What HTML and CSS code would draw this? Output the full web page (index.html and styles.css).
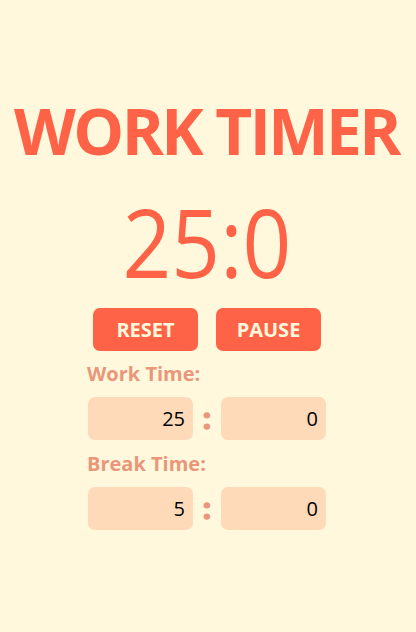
FILE: index.html
```html
<!DOCTYPE html>
<html>
<head>
<meta charset="utf-8">
<link rel="stylesheet" href="styles.css">
</head>
<body>
<main class="app">
  <h1 class="title">WORK TIMER</h1>
  <div class="clock">25:0</div>
  <div class="controls">
    <button class="btn">RESET</button>
    <button class="btn">PAUSE</button>
  </div>
  <section class="settings">
    <label class="label">Work Time:</label>
    <div class="row">
      <input class="field" type="text" value="25">
      <span class="sep">:</span>
      <input class="field" type="text" value="0">
    </div>
    <label class="label">Break Time:</label>
    <div class="row">
      <input class="field" type="text" value="5">
      <span class="sep">:</span>
      <input class="field" type="text" value="0">
    </div>
  </section>
</main>
</body>
</html>
```
FILE: styles.css
```css
html, body {
  margin: 0;
  padding: 0;
  background: #fff8dc;
  height: 100%;
}
body {
  font-family: "Open Sans", "Noto Sans", sans-serif;
}
.app {
  display: flex;
  flex-direction: column;
  align-items: center;
  padding-top: 99px;
  padding-right: 2px;
}
.title {
  margin: 0;
  font-size: 64px;
  line-height: 64px;
  font-weight: 700;
  letter-spacing: -2.6px;
  text-indent: -1px;
  color: #ff6347;
  white-space: nowrap;
}
.clock {
  margin-top: 30px;
  font-size: 96px;
  line-height: 95px;
  transform: scaleX(0.89);
  color: #ff6347;
}
.controls {
  margin-top: 20px;
  display: flex;
  gap: 18px;
}
.btn {
  width: 105px;
  height: 43px;
  border: none;
  border-radius: 7px;
  background: #ff6347;
  color: #fff8dc;
  font-family: inherit;
  font-size: 20px;
  font-weight: 700;
  padding: 0;
}
.settings {
  width: 238px;
  display: flex;
  flex-direction: column;
  margin-top: 13px;
}
.label {
  margin-left: -1px;
  font-size: 20px;
  line-height: 20px;
  font-weight: 700;
  color: #e9967a;
}
.row {
  display: flex;
  align-items: center;
  justify-content: space-between;
  margin-top: 13px;
  margin-bottom: 14px;
}
.field {
  width: 105px;
  height: 43px;
  box-sizing: border-box;
  border: none;
  border-radius: 7px;
  background: #ffdab9;
  font-family: inherit;
  font-size: 20px;
  color: #000;
  text-align: right;
  padding: 0 8px;
  outline: none;
}
.sep {
  font-size: 29px;
  font-weight: 700;
  color: #e9967a;
  -webkit-text-stroke: 1.5px #e9967a;
  line-height: 1;
  margin-top: -2px;
}
```
